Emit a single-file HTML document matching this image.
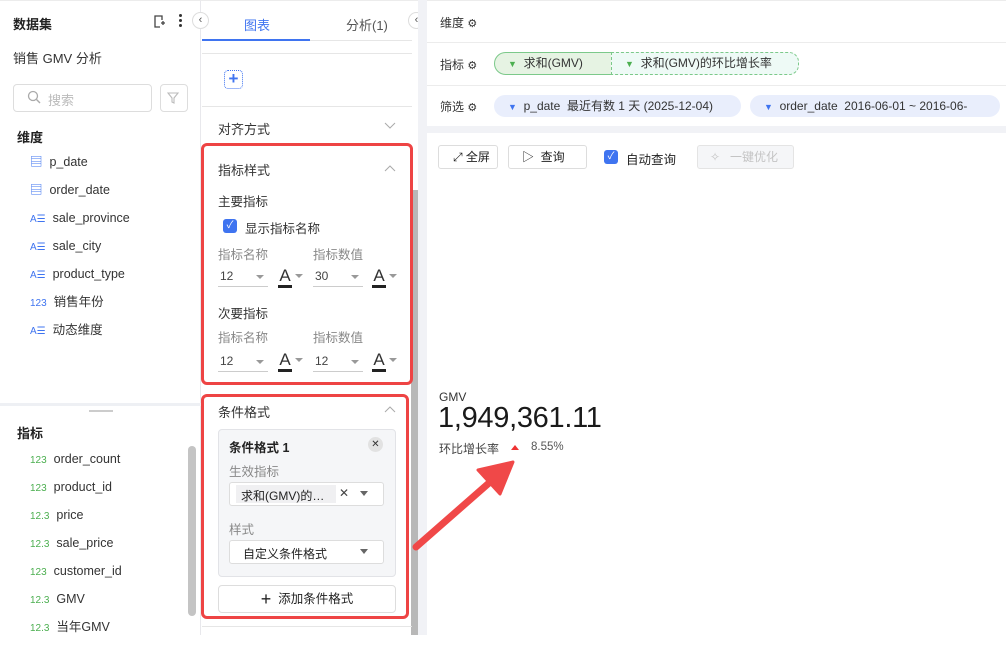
<!DOCTYPE html>
<html><head><meta charset="utf-8"><style>
*{box-sizing:border-box;margin:0;padding:0}
body{width:1006px;height:635px;overflow:hidden;background:#fff;font-family:"Liberation Sans","Noto Sans CJK SC",sans-serif;font-size:12px;color:#333;position:relative}
.a{position:absolute}
.b{font-weight:bold;color:#222}
.blue{color:#3f74f0}
.green{color:#4caf50;font-size:10px}
.sel{position:absolute;border-bottom:1px solid #ccc;height:22px;width:50px;font-size:12px;color:#444;padding:4px 2px}
.sel:after{content:"";position:absolute;right:4px;top:10px;border:4px solid transparent;border-top:4px solid #999}
.fa{position:absolute;font-size:17px;color:#333;width:14px;text-align:center;line-height:16px}
.fa:before{content:"";position:absolute;left:0;top:17px;width:14px;height:3px;background:#222}
.fa:after{content:"";position:absolute;left:17px;top:6px;border:4px solid transparent;border-top:4px solid #999}
</style></head><body>
<!-- left panel -->
<div class="a" style="left:0;top:0;width:201px;height:635px;border-right:1px solid #e8e8ec;border-top:1px solid #ececec"></div>
<div class="a b" style="left:13px;top:14px;font-size:13px">数据集</div>
<svg class="a" style="left:152px;top:14px" width="14" height="14" viewBox="0 0 14 14"><path d="M10 6V2H3v11h5M9 9h4M11 7v4" fill="none" stroke="#444" stroke-width="1.3"/></svg>
<div class="a" style="left:179px;top:14px;width:3px;height:3px;background:#333;border-radius:2px;box-shadow:0 5px #333,0 10px #333"></div>
<div class="a" style="left:192px;top:12px;width:17px;height:17px;border-radius:50%;border:1px solid #ddd;background:#fff;font-size:11px;line-height:14px;text-align:center;color:#555">‹</div>
<div class="a" style="left:13px;top:48px;font-size:13px;color:#333">销售 GMV 分析</div>
<div class="a" style="left:13px;top:84px;width:139px;height:28px;border:1px solid #ddd;border-radius:4px"></div>
<svg class="a" style="left:27px;top:90px" width="14" height="14"><circle cx="6" cy="6" r="4.5" fill="none" stroke="#aaa" stroke-width="1.3"/><path d="M9.5 9.5l3.5 3.5" stroke="#aaa" stroke-width="1.4"/></svg>
<div class="a" style="left:48px;top:90px;color:#bbb;font-size:13px">搜索</div>
<div class="a" style="left:160px;top:84px;width:28px;height:28px;border:1px solid #ddd;border-radius:4px"></div>
<svg class="a" style="left:167px;top:91px" width="14" height="14"><path d="M1 2h10L7 7v5L5 11V7z" fill="none" stroke="#bbb" stroke-width="1.1"/></svg>
<div class="a b" style="left:17px;top:127px;font-size:13px">维度</div>
<div class="a" style="left:30px;top:153px;line-height:18px;font-size:12.5px">
<div style="height:28px"><span class="blue">▤</span>&nbsp; p_date</div>
<div style="height:28px"><span class="blue">▤</span>&nbsp; order_date</div>
<div style="height:28px"><span class="blue" style="font-size:10px">A☰</span>&nbsp; sale_province</div>
<div style="height:28px"><span class="blue" style="font-size:10px">A☰</span>&nbsp; sale_city</div>
<div style="height:28px"><span class="blue" style="font-size:10px">A☰</span>&nbsp; product_type</div>
<div style="height:28px"><span class="blue" style="font-size:10px">123</span>&nbsp; 销售年份</div>
<div style="height:28px"><span class="blue" style="font-size:10px">A☰</span>&nbsp; 动态维度</div>
</div>
<div class="a" style="left:0;top:403px;width:201px;height:3px;background:#eef0f4"></div>
<div class="a" style="left:89px;top:410px;width:24px;height:2px;background:#ccc"></div>
<div class="a b" style="left:17px;top:423px;font-size:13px">指标</div>
<div class="a" style="left:188px;top:446px;width:8px;height:170px;border-radius:4px;background:#c4c4c4"></div>
<div class="a" style="left:30px;top:450px;line-height:18px;font-size:12.5px">
<div style="height:28px"><span class="green">123</span>&nbsp; order_count</div>
<div style="height:28px"><span class="green">123</span>&nbsp; product_id</div>
<div style="height:28px"><span class="green">12.3</span>&nbsp; price</div>
<div style="height:28px"><span class="green">12.3</span>&nbsp; sale_price</div>
<div style="height:28px"><span class="green">123</span>&nbsp; customer_id</div>
<div style="height:28px"><span class="green">12.3</span>&nbsp; GMV</div>
<div style="height:28px"><span class="green">12.3</span>&nbsp; 当年GMV</div>
</div>
<!-- middle panel -->
<div class="a" style="left:201px;top:0;width:217px;height:635px;border-top:1px solid #ececec"></div>
<div class="a" style="left:244px;top:15px;color:#3f74f0;font-size:13px">图表</div>
<div class="a" style="left:346px;top:15px;color:#555;font-size:13px">分析(1)</div>
<div class="a" style="left:202px;top:40px;width:210px;height:1px;background:#e6e6e6"></div>
<div class="a" style="left:202px;top:39px;width:108px;height:2px;background:#3f74f0"></div>
<div class="a" style="left:408px;top:12px;width:17px;height:17px;border-radius:50%;border:1px solid #ddd;background:#fff;font-size:11px;line-height:14px;text-align:center;color:#555">‹</div>
<div class="a" style="left:202px;top:53px;width:210px;height:1px;background:#e6e6e6"></div>
<div class="a" style="left:224px;top:70px;width:19px;height:19px;border:1.5px dotted #3f74f0;border-radius:4px;color:#3f74f0;font-size:17px;line-height:15px;text-align:center;font-weight:bold">+</div>
<div class="a" style="left:202px;top:106px;width:210px;height:1px;background:#e6e6e6"></div>
<div class="a" style="left:218px;top:119px;font-size:13px;color:#333">对齐方式</div>
<svg class="a" style="left:384px;top:122px" width="12" height="8"><path d="M1 1l5 5 5-5" fill="none" stroke="#aaa"/></svg>
<div class="a" style="left:411px;top:190px;width:7px;height:445px;background:#b8b8b8"></div>
<!-- red box 1 -->
<div class="a" style="left:201px;top:143px;width:212px;height:242px;border:3px solid #ee4444;border-radius:6px"></div>
<div class="a" style="left:218px;top:160px;font-size:13px">指标样式</div>
<svg class="a" style="left:384px;top:164px" width="12" height="8"><path d="M1 7l5-5 5 5" fill="none" stroke="#aaa"/></svg>
<div class="a" style="left:218px;top:191px;font-size:12.5px">主要指标</div>
<div class="a" style="left:223px;top:219px;width:14px;height:14px;border-radius:3px;background:#3f74f0;color:#fff;font-size:10px;line-height:14px;text-align:center">✓</div>
<div class="a" style="left:245px;top:218px;font-size:12.5px">显示指标名称</div>
<div class="a" style="left:218px;top:244px;color:#888;font-size:12.5px">指标名称</div>
<div class="a" style="left:313px;top:244px;color:#888;font-size:12.5px">指标数值</div>
<div class="sel" style="left:218px;top:265px">12</div>
<div class="fa" style="left:278px;top:268px">A</div>
<div class="sel" style="left:313px;top:265px">30</div>
<div class="fa" style="left:372px;top:268px">A</div>
<div class="a" style="left:218px;top:303px;font-size:12.5px">次要指标</div>
<div class="a" style="left:218px;top:327px;color:#888;font-size:12.5px">指标名称</div>
<div class="a" style="left:313px;top:327px;color:#888;font-size:12.5px">指标数值</div>
<div class="sel" style="left:218px;top:350px">12</div>
<div class="fa" style="left:278px;top:352px">A</div>
<div class="sel" style="left:313px;top:350px">12</div>
<div class="fa" style="left:372px;top:352px">A</div>
<!-- red box 2 -->
<div class="a" style="left:201px;top:394px;width:208px;height:225px;border:3px solid #ee4444;border-radius:6px"></div>
<div class="a" style="left:218px;top:402px;font-size:13px">条件格式</div>
<svg class="a" style="left:384px;top:405px" width="12" height="8"><path d="M1 7l5-5 5 5" fill="none" stroke="#aaa"/></svg>
<div class="a" style="left:218px;top:429px;width:178px;height:148px;background:#f5f6f8;border:1px solid #e2e3e7;border-radius:4px"></div>
<div class="a b" style="left:229px;top:437px;font-size:12.5px">条件格式 1</div>
<div class="a" style="left:368px;top:437px;width:15px;height:15px;border-radius:50%;background:#e2e2e2;font-size:10px;text-align:center;line-height:15px;color:#333">✕</div>
<div class="a" style="left:229px;top:461px;color:#888;font-size:12.5px">生效指标</div>
<div class="a" style="left:229px;top:482px;width:155px;height:24px;background:#fff;border:1px solid #ddd;border-radius:3px"></div>
<div class="a" style="left:236px;top:485px;width:100px;height:18px;background:#f0f0f2;font-size:12px;padding:2px 5px;color:#222">求和(GMV)的…</div>
<div class="a" style="left:339px;top:486px;font-size:12px;color:#444">✕</div>
<div class="a" style="left:360px;top:491px;border:4px solid transparent;border-top:5px solid #666"></div>
<div class="a" style="left:229px;top:519px;color:#888;font-size:12.5px">样式</div>
<div class="a" style="left:229px;top:540px;width:155px;height:24px;background:#fff;border:1px solid #ddd;border-radius:3px;padding:4px 13px;font-size:12px;color:#222">自定义条件格式</div>
<div class="a" style="left:360px;top:549px;border:4px solid transparent;border-top:5px solid #666"></div>
<div class="a" style="left:218px;top:585px;width:178px;height:28px;border:1px solid #ddd;border-radius:4px;background:#fff;text-align:center;font-size:12.5px;line-height:26px;color:#222"><span style="font-size:18px;vertical-align:-2px">+</span>&nbsp; 添加条件格式</div>
<div class="a" style="left:202px;top:626px;width:210px;height:1px;background:#e6e6e6"></div>
<!-- right -->
<div class="a" style="left:418px;top:0;width:9px;height:635px;background:#f1f2f6"></div>
<div class="a" style="left:427px;top:0;width:579px;height:1px;background:#ececec"></div>
<div class="a" style="left:440px;top:14px;font-size:12px">维度 <span style="font-size:11px">⚙</span></div>
<div class="a" style="left:427px;top:42px;width:579px;height:1px;background:#ececec"></div>
<div class="a" style="left:440px;top:56px;font-size:12px">指标 <span style="font-size:11px">⚙</span></div>
<div class="a" style="left:494px;top:52px;width:118px;height:23px;background:#e6f3e3;border:1px solid #7cc98a;border-radius:12px 0 0 12px;padding:0 0 0 13px;line-height:21px;font-size:12px"><span style="color:#4caf50;font-size:9px">▼</span>&nbsp; 求和(GMV)</div>
<div class="a" style="left:611px;top:52px;width:188px;height:23px;background:#eefaf6;border:1px dashed #7cc98a;border-radius:0 10px 10px 0;padding:0 0 0 13px;line-height:21px;font-size:12px"><span style="color:#4caf50;font-size:9px">▼</span>&nbsp; 求和(GMV)的环比增长率</div>
<div class="a" style="left:427px;top:85px;width:579px;height:1px;background:#ececec"></div>
<div class="a" style="left:440px;top:98px;font-size:12px">筛选 <span style="font-size:11px">⚙</span></div>
<div class="a" style="left:494px;top:95px;width:247px;height:22px;background:#e9eefc;border-radius:11px;padding:0 0 0 14px;line-height:22px;font-size:12px;white-space:nowrap"><span style="color:#3f74f0;font-size:9px">▼</span>&nbsp; p_date&nbsp; 最近有数 1 天 (2025-12-04)</div>
<div class="a" style="left:750px;top:95px;width:250px;height:22px;background:#e9eefc;border-radius:11px;padding:0 0 0 14px;line-height:22px;font-size:12px;white-space:nowrap"><span style="color:#3f74f0;font-size:9px">▼</span>&nbsp; order_date&nbsp; 2016-06-01 ~ 2016-06-</div>
<div class="a" style="left:427px;top:126px;width:579px;height:7px;background:#f1f2f6"></div>
<div class="a" style="left:438px;top:145px;width:60px;height:24px;border:1px solid #ddd;border-radius:3px;font-size:12px;line-height:22px;padding-left:14px;color:#222">⤢ 全屏</div>
<div class="a" style="left:508px;top:145px;width:79px;height:24px;border:1px solid #ddd;border-radius:3px;font-size:12px;line-height:22px;padding-left:13px;color:#222">▷&nbsp; 查询</div>
<div class="a" style="left:604px;top:150px;width:14px;height:14px;border-radius:3px;background:#3f74f0;color:#fff;font-size:10px;line-height:14px;text-align:center">✓</div>
<div class="a" style="left:626px;top:149px;font-size:12.5px;color:#222">自动查询</div>
<div class="a" style="left:697px;top:145px;width:97px;height:24px;border:1px solid #e4e4e4;background:#f5f6f8;border-radius:3px;font-size:12px;line-height:22px;padding-left:12px;color:#c4c4c4">✧&nbsp;&nbsp; 一键优化</div>
<div class="a" style="left:439px;top:390px;font-size:12px;color:#333">GMV</div>
<div class="a" style="left:438px;top:402px;font-size:29px;color:#1a1a1a;letter-spacing:-0.3px">1,949,361.11</div>
<div class="a" style="left:439px;top:440px;font-size:12px;color:#444">环比增长率</div>
<div class="a" style="left:511px;top:445px;border:4px solid transparent;border-bottom:5px solid #e33;border-top:0"></div>
<div class="a" style="left:531px;top:441px;font-size:11.5px;color:#555">8.55%</div>
<svg class="a" style="left:0;top:0" width="1006" height="635"><path d="M416 547L489 483" stroke="#f04848" stroke-width="7" stroke-linecap="round"/><path d="M478 470L513 462L500 494Z" fill="#f04848" stroke="#f04848" stroke-width="3" stroke-linejoin="round"/></svg>
</body></html>
